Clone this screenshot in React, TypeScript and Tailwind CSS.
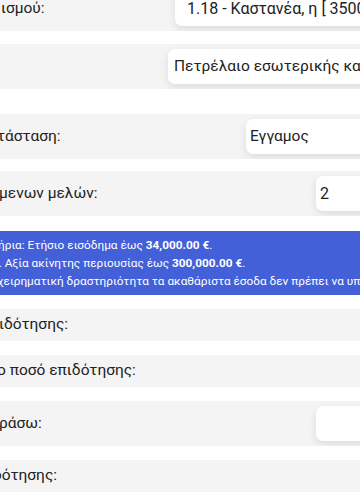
import React from "react";

const font = { fontFamily: "Roboto, 'Noto Sans', sans-serif" };

function Field({
  label,
  shift,
  inputLeft,
  value,
  pad = "pl-[6px]",
  size = "text-[15.5px]",
}: {
  label: string;
  shift: string;
  inputLeft?: string;
  value?: string;
  pad?: string;
  size?: string;
}) {
  return (
    <div
      className={`flex items-center overflow-hidden bg-[#f4f4f4] ${
        inputLeft ? "h-[45px]" : "h-[32px]"
      }`}
    >
      <div className={`shrink-0 overflow-hidden ${inputLeft ?? "w-full"}`}>
        <span
          className={`block whitespace-nowrap text-[15.5px] text-[#222] ${shift}`}
        >
          {label}
        </span>
      </div>
      {inputLeft && (
        <div
          className={`flex h-[35px] w-[320px] shrink-0 items-center rounded-[7px] bg-white ${pad} ${size} text-[#222] whitespace-nowrap shadow-[0_3px_8px_rgba(0,0,0,0.10)]`}
        >
          {value}
        </div>
      )}
    </div>
  );
}

export default function App() {
  return (
    <div className="h-[504px] w-[360px] overflow-hidden bg-white" style={font}>
      <div className="-mt-[14px] flex flex-col gap-[13px]">
        <Field
          label="ισμού:"
          shift="ml-[1px]"
          inputLeft="w-[175px]"
          value="1.18 - Καστανέα, η [ 35003 ]"
          pad="pl-[12px]"
          size="text-[16px]"
        />
        <Field
          label=""
          shift=""
          inputLeft="w-[168px]"
          value="Πετρέλαιο εσωτερικής καύσης"
        />
        <div className="flex flex-col gap-[12px] pt-[12px]">
          <Field
            label="τάσταση:"
            shift="-ml-[3px]"
            inputLeft="w-[246px]"
            value="Εγγαμος"
            pad="pl-[4px]"
          />
          <Field
            label="μενων μελών:"
            shift="-ml-[1px]"
            inputLeft="w-[316px]"
            value="2"
            pad="pl-[4px]"
            size="text-[16px]"
          />
        </div>
        <div className="mt-[2px] overflow-hidden bg-[#4360d8] py-[5px] text-[11.8px] leading-[18px] text-white">
          <p className="-ml-[2px] whitespace-nowrap">
            ήρια: Ετήσιο εισόδημα έως <b>34,000.00 €</b>.
          </p>
          <p className="-ml-[8px] whitespace-nowrap">
            2. Αξία ακίνητης περιουσίας έως <b>300,000.00 €</b>.
          </p>
          <p className="-ml-[3px] whitespace-nowrap">
            χειρηματική δραστηριότητα τα ακαθάριστα έσοδα δεν πρέπει να υπερβαίνουν
          </p>
        </div>
        <div className="flex flex-col gap-[14px] pt-[1px]">
          <Field label="ιδότησης:" shift="-ml-[1px]" />
          <Field label="ο ποσό επιδότησης:" shift="-ml-[3px]" />
          <Field
            label="ράσω:"
            shift="-ml-[1px]"
            inputLeft="w-[316px]"
            value=""
          />
          <Field label="δότησης:" shift="-ml-[7px]" />
        </div>
      </div>
    </div>
  );
}
